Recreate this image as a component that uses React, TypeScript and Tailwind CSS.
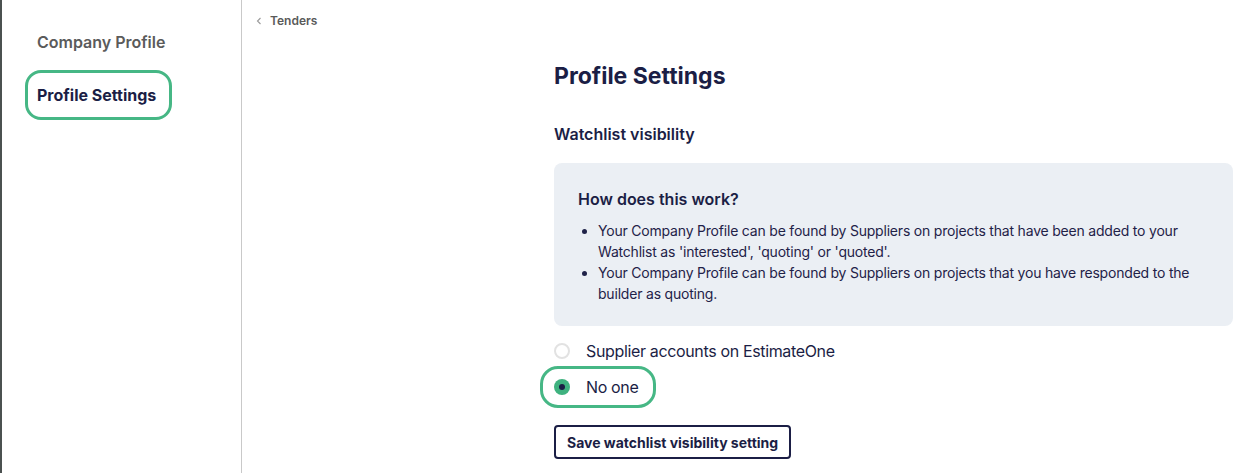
import React, { useState } from 'react'

const font = { fontFamily: 'Inter, "Noto Sans", sans-serif' }

const Sidebar: React.FC = () => {
  return (
    <aside className="w-[240px] shrink-0 border-r border-[#c9c9c9] pt-[30px] pl-[35px]">
      <div className="text-[16px] leading-6 font-semibold text-[#5b5b5b]">Company Profile</div>
      <div className="mt-4 -ml-[12px] inline-flex rounded-[16px] border-[3px] border-[#46b785] py-[10px] pl-[9px] pr-[13px]">
        <span className="text-[16px] leading-6 font-bold text-[#1b1e45]">Profile Settings</span>
      </div>
    </aside>
  )
}

const Radio: React.FC<{ checked: boolean }> = ({ checked }) =>
  checked ? (
    <span className="flex h-4 w-4 items-center justify-center rounded-full bg-[#3fb27f]">
      <span className="h-[6px] w-[6px] rounded-full bg-[#1b1e45]" />
    </span>
  ) : (
    <span className="h-4 w-4 rounded-full border-2 border-[#e2e2e2] bg-white" />
  )

export default function App() {
  const [choice, setChoice] = useState<'suppliers' | 'none'>('none')

  return (
    <div style={font} className="flex min-h-[473px] border-l-2 border-[#4b5150] bg-white text-[#1b1e45]">
      <Sidebar />
      <main className="flex-1 pt-[13px]">
        <div className="flex items-center pl-[14px] text-[12px] leading-4 font-semibold text-[#5a5a5a]">
          <svg width="6" height="8" viewBox="0 0 6 8" className="mr-[8px]">
            <path d="M4.5 1 L1.5 4 L4.5 7" fill="none" stroke="#9a9a9a" strokeWidth="1.1" />
          </svg>
          Tenders
        </div>

        <div className="pl-[312px] pr-[14px]">
          <h1 className="mt-[33px] text-[23px] leading-7 font-bold">Profile Settings</h1>
          <h2 className="mt-[32px] text-[16px] leading-6 font-semibold">Watchlist visibility</h2>

          <div className="mt-[17px] rounded-lg bg-[#ebeff4] pt-6 pb-[22px] pl-6 pr-6">
            <h3 className="text-[16px] leading-6 font-semibold">How does this work?</h3>
            <ul className="mt-[9px] list-disc pl-5 text-[14px] leading-[21px] tracking-[-0.2px] text-[#1f2248]">
              <li>
                Your Company Profile can be found by Suppliers on projects that have been added to your Watchlist as
                'interested', 'quoting' or 'quoted'.
              </li>
              <li>
                Your Company Profile can be found by Suppliers on projects that you have responded to the builder as
                quoting.
              </li>
            </ul>
          </div>

          <label
            className="mt-[13px] flex h-6 cursor-pointer items-center gap-4 text-[16px] tracking-[-0.35px]"
            onClick={() => setChoice('suppliers')}
          >
            <Radio checked={choice === 'suppliers'} />
            Supplier accounts on EstimateOne
          </label>

          <label
            className="-ml-[14px] mt-[3px] inline-flex cursor-pointer items-center gap-4 rounded-[18px] border-[3px] border-[#46b785] py-[6px] pl-[11px] pr-[15px] text-[16px] leading-6 tracking-[-0.35px]"
            onClick={() => setChoice('none')}
          >
            <Radio checked={choice === 'none'} />
            No one
          </label>

          <div className="mt-[17px]">
            <button className="h-[34px] rounded-[4px] border-2 border-[#1b1e45] px-[11px] text-[14px] font-bold text-[#1b1e45]">
              Save watchlist visibility setting
            </button>
          </div>
        </div>
      </main>
    </div>
  )
}
